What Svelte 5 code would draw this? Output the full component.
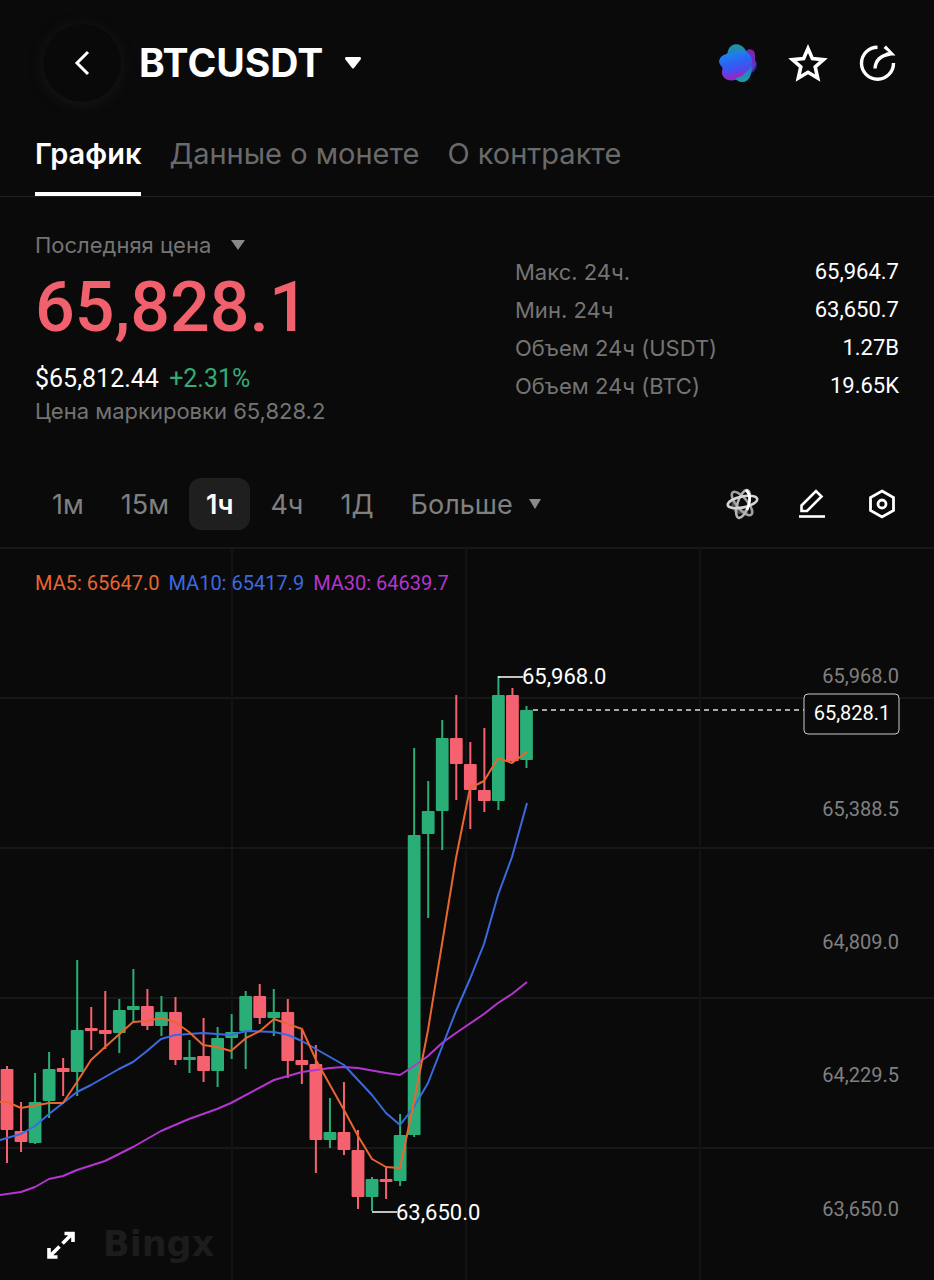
<script>
    const tabs = ["График", "Данные о монете", "О контракте"];
    const intervals = ["1м", "15м", "1ч", "4ч", "1Д"];

    const stats = [
        { label: "Макс. 24ч.", value: "65,964.7" },
        { label: "Мин. 24ч", value: "63,650.7" },
        { label: "Объем 24ч (USDT)", value: "1.27B" },
        { label: "Объем 24ч (BTC)", value: "19.65K" },
    ];

    const averages = [
        { label: "MA5: 65647.0", color: "#ea6530" },
        { label: "MA10: 65417.9", color: "#3b6ae0" },
        { label: "MA30: 64639.7", color: "#b535d0" },
    ];

    const CHART_TOP = 548;
    const STEP = 14.04;
    const BODY_WIDTH = 12.8;

    // up/down, high, body top, body bottom, low
    const candles = [
        ["down", 1066, 1069, 1130, 1163],
        ["down", 1102, 1131, 1142, 1152],
        ["up", 1073, 1102, 1143, 1144],
        ["up", 1052, 1069, 1101, 1118],
        ["down", 1058, 1068, 1072, 1096],
        ["up", 960, 1030, 1072, 1096],
        ["down", 1007, 1028, 1031, 1050],
        ["down", 991, 1030, 1034, 1049],
        ["up", 999, 1010, 1033, 1053],
        ["up", 969, 1006, 1010, 1021],
        ["down", 989, 1006, 1026, 1030],
        ["up", 996, 1012, 1026, 1036],
        ["down", 997, 1012, 1060, 1065],
        ["up", 1040, 1057, 1060, 1073],
        ["down", 1018, 1056, 1071, 1082],
        ["up", 1027, 1038, 1071, 1087],
        ["up", 1014, 1032, 1038, 1059],
        ["up", 991, 996, 1031, 1069],
        ["down", 984, 996, 1018, 1024],
        ["up", 989, 1012, 1018, 1036],
        ["down", 999, 1012, 1061, 1078],
        ["down", 1030, 1060, 1065, 1084],
        ["down", 1045, 1064, 1140, 1173],
        ["up", 1098, 1132, 1140, 1148],
        ["down", 1082, 1132, 1150, 1155],
        ["down", 1130, 1150, 1197, 1209],
        ["up", 1177, 1179, 1197, 1211],
        ["down", 1167, 1179, 1182, 1199],
        ["up", 1114, 1135, 1181, 1186],
        ["up", 748, 835, 1135, 1137],
        ["up", 781, 811, 834, 918],
        ["up", 720, 738, 811, 850],
        ["down", 695, 738, 764, 800],
        ["down", 742, 764, 790, 829],
        ["down", 728, 790, 801, 812],
        ["up", 676, 695, 801, 810],
        ["down", 688, 695, 761, 763],
        ["up", 706, 710, 760, 768],
    ].map(([dir, high, top, bottom, low], i) => ({ dir, high, top, bottom, low, x: 7 + i * STEP }));

    const lines = [
        {
            color: "#b535d0",
            points: "0,1195 21,1192 35,1187 49,1179 63,1176 77,1170 105,1161 119,1154 133,1147 161,1131 189,1119 203,1114 217,1109 231,1103 274,1080 302,1072 330,1068 344,1067 358,1068 386,1073 400,1075 414,1066 428,1056 442,1043 456,1033 484,1014 498,1003 512,994 527,982",
        },
        {
            color: "#3b6ae0",
            points: "0,1140 7,1138 21,1134 35,1126 49,1114 63,1103 77,1092 91,1085 105,1077 119,1069 133,1062 147,1051 161,1039 175,1035 203,1033 231,1035 246,1031 274,1032 288,1035 302,1041 316,1049 344,1065 372,1095 386,1113 400,1125 414,1107 428,1083 442,1047 456,1011 470,979 484,944 498,895 512,857 527,803",
        },
        {
            color: "#ea6530",
            points: "0,1102 7,1102 21,1108 49,1103 63,1103 77,1082 91,1060 105,1047 133,1022 147,1021 161,1018 175,1022 189,1032 203,1045 217,1047 231,1051 246,1038 260,1031 274,1019 288,1024 302,1029 316,1060 344,1110 358,1136 372,1159 386,1167 400,1168 414,1102 428,1030 442,944 456,858 470,788 484,781 498,758 512,763 527,752",
        },
    ];

    const gridRows = [548, 698, 848, 998, 1148];
    const gridCols = [232, 466, 700];

    const priceTicks = [
        { y: 683, label: "65,968.0" },
        { y: 816, label: "65,388.5" },
        { y: 949, label: "64,809.0" },
        { y: 1082, label: "64,229.5" },
        { y: 1216, label: "63,650.0" },
    ];

    let activeTab = $state("График");
    let activeInterval = $state("1ч");
</script>

<div class="screen">
    <header>
        <button class="back" aria-label="Назад">
            <svg width="40" height="40" viewBox="0 0 40 40">
                <path d="M26 9 15 20 26 31" fill="none" stroke="#fff" stroke-width="3" />
            </svg>
        </button>
        <button class="pair">
            <span>BTCUSDT</span>
            <svg width="16" height="12" viewBox="0 0 16 12"><path d="M1 0h14q1 0 1 2l-7 9q-1 1-2 0L0 2Q0 0 1 0z" fill="#fff" /></svg>
        </button>
        <div class="actions">
            <button aria-label="AI">
                <svg width="40" height="40" viewBox="0 0 40 40">
                    <defs>
                        <linearGradient id="blob" x1="0" y1="0" x2="0.3" y2="1">
                            <stop offset="0" stop-color="#1c8fe8" />
                            <stop offset="0.5" stop-color="#2b63f5" />
                            <stop offset="0.8" stop-color="#4a4be8" />
                            <stop offset="1" stop-color="#a021c4" />
                        </linearGradient>
                        <linearGradient id="teal" x1="0" y1="0" x2="0" y2="1">
                            <stop offset="0" stop-color="#1f93a0" />
                            <stop offset="0.5" stop-color="#2272e6" />
                            <stop offset="1" stop-color="#249aa0" />
                        </linearGradient>
                        <linearGradient id="plum" x1="1" y1="0" x2="0" y2="1">
                            <stop offset="0" stop-color="#8d1da1" />
                            <stop offset="0.5" stop-color="#3c49df" />
                            <stop offset="1" stop-color="#b01fc0" />
                        </linearGradient>
                    </defs>
                    <ellipse cx="30" cy="22" rx="9" ry="9" fill="#1b2c78" />
                    <path d="M28 8c4-4 10-1 9 6 0 3 0 4 1 7-2 9-12 14-21 16-8 2-14-3-13-9C5 21 22 13 28 8z" fill="url(#plum)" />
                    <path d="M10 8c2-9 14-9 18 0 3 4 4 8 5 13 2 8-1 18-8 18-6 1-10-5-12-14C11 19 7 15 10 8z" fill="url(#teal)" />
                    <path d="M1 18C3 10 12 10 20 9c8-2 14 3 14 9 0 7-5 10-9 14-5 4-12 4-18 2-4-3-1-6-3-10-2-2-3-4-3-6z" fill="url(#blob)" />
                </svg>
            </button>
            <button aria-label="В избранное">
                <svg width="40" height="40" viewBox="0 0 40 40">
                    <path d="M20 5.500 24.400 15.600 35.500 16.600 27.200 24 29.700 35 20 29.300 10.300 35 12.800 24 4.500 16.600 15.600 15.600z" fill="none" stroke="#fff" stroke-width="3.600" />
                </svg>
            </button>
            <button aria-label="Поделиться">
                <svg width="40" height="40" viewBox="0 0 40 40" fill="none" stroke="#fff" stroke-width="3.400">
                    <path d="M19.500 4.200A16 16 0 1 0 35.500 20" />
                    <path d="M17 25.500C17.500 17.500 23 12.500 32 11" />
                    <path d="M28 2.500 37.500 12.500H28V9.500h3L25.500 5z" fill="#fff" stroke="none" />
                </svg>
            </button>
        </div>
    </header>

    <nav>
        {#each tabs as tab}
            <button class="tab" class:active={tab === activeTab} onclick={() => (activeTab = tab)}>{tab}</button>
        {/each}
    </nav>

    <section class="summary">
        <div class="price">
            <button class="price-type">
                Последняя цена
                <svg width="14" height="10" viewBox="0 0 14 10"><path d="M0 0h14L7 10z" fill="#8a8a8a" /></svg>
            </button>
            <div class="last">65,828.1</div>
            <div class="index">$65,812.44 <span>+2.31%</span></div>
            <div class="mark">Цена маркировки 65,828.2</div>
        </div>
        <dl>
            {#each stats as stat}
                <div class="stat">
                    <dt>{stat.label}</dt>
                    <dd>{stat.value}</dd>
                </div>
            {/each}
        </dl>
    </section>

    <div class="toolbar">
        <div class="intervals">
            {#each intervals as interval}
                <button class:active={interval === activeInterval} onclick={() => (activeInterval = interval)}>{interval}</button>
            {/each}
            <button class="more">
                Больше
                <svg width="12" height="10" viewBox="0 0 12 10"><path d="M0 0h12L6 10z" fill="#8a8a8a" /></svg>
            </button>
        </div>
        <div class="tools">
            <button aria-label="Анализ">
                <svg width="34" height="34" viewBox="0 0 34 34" fill="none" stroke-width="2.600">
                    <path d="M9 14C6 23 12 27 23 24" stroke="#484848" stroke-width="3.600" />
                    <ellipse cx="17" cy="16.500" rx="14.500" ry="5.500" transform="rotate(50 17 16.500)" stroke="#a0a0a0" />
                    <ellipse cx="18" cy="17" rx="14.500" ry="5.500" transform="rotate(-72 18 17)" stroke="#b5b5b5" />
                    <ellipse cx="17.500" cy="15" rx="15" ry="5.500" transform="rotate(-12 17.500 15)" stroke="#d5d5d5" />
                    <path d="M21 3C26 8 25 16 22 23" stroke="#fff" />
                </svg>
            </button>
            <button aria-label="Рисование">
                <svg width="34" height="34" viewBox="0 0 34 34" fill="none" stroke="#fff" stroke-width="2.600">
                    <path d="M6.500 18.500 21 4 26.500 9.500 12 24H6.500z" />
                    <path d="M4 29.500h26" />
                </svg>
            </button>
            <button aria-label="Настройки">
                <svg width="34" height="34" viewBox="0 0 34 34" fill="none" stroke="#fff" stroke-width="2.800">
                    <path d="M17 4 28.500 10.500v13L17 30 5.500 23.500v-13z" />
                    <circle cx="17" cy="17" r="4" />
                </svg>
            </button>
        </div>
    </div>

    <div class="chart">
        <svg class="plot" viewBox="0 {CHART_TOP - 1} 934 733">
            {#each gridRows as y}
                <line x1="0" x2="934" y1={y} y2={y} class="grid" />
            {/each}
            {#each gridCols as x}
                <line x1={x} x2={x} y1={CHART_TOP} y2="1280" class="grid column" />
            {/each}

            {#each candles as c}
                <g class={c.dir}>
                    <rect x={c.x - 1} y={c.high} width="2" height={c.low - c.high} />
                    <rect x={c.x - BODY_WIDTH / 2} y={c.top} width={BODY_WIDTH} height={c.bottom - c.top} rx="1" />
                </g>
            {/each}

            {#each lines as line}
                <polyline points={line.points} stroke={line.color} class="average" />
            {/each}

            <path d="M498 677h25M372 1212h25" stroke="#fff" stroke-width="1.500" />
            <text x="522" y="684" class="extreme">65,968.0</text>
            <text x="396" y="1220" class="extreme">63,650.0</text>

            {#each priceTicks as tick}
                <text x="899" y={tick.y} class="tick">{tick.label}</text>
            {/each}

            <line x1="533" x2="804" y1="710" y2="710" class="current-line" />
            <rect x="804" y="694" width="95" height="40" rx="4" class="current-box" />
            <text x="852" y="720" class="current">65,828.1</text>

            <text x="103" y="1256" class="watermark">Bingx</text>
        </svg>
        <div class="legend">
            {#each averages as average}
                <span style="color: {average.color}">{average.label}</span>
            {/each}
        </div>
        <button class="expand" aria-label="На весь экран">
            <svg width="32" height="32" viewBox="0 0 32 32" fill="none" stroke="#fff" stroke-width="3.600">
                <path d="M17.500 14.500 27 5M19.500 4.500H28V13M14.500 17.500 5 27M4 19v9h8.500" />
            </svg>
        </button>
    </div>
</div>

<style>
    :global(body) {
        margin: 0;
        background: #0a0a0a;
    }

    .screen {
        background: #0a0a0a;
        color: #fff;
        font-family: Inter, "Open Sans", sans-serif;
    }

    button {
        border: 0;
        padding: 0;
        background: none;
        color: inherit;
        font: inherit;
        cursor: pointer;
    }

    svg {
        display: block;
    }

    header {
        display: flex;
        align-items: center;
        padding: 24px 36px 0 43px;
    }

    .back {
        display: flex;
        align-items: center;
        justify-content: center;
        width: 78px;
        height: 78px;
        border-radius: 50%;
        background: #090909;
        box-shadow: 0 2px 12px 2px #151515;
    }

    .pair {
        display: flex;
        align-items: center;
        gap: 22px;
        margin-left: 18px;
        font-size: 39px;
        font-weight: 700;
        line-height: 48px;
    }

    .actions {
        display: flex;
        gap: 30px;
        margin-left: auto;
    }

    nav {
        display: flex;
        gap: 28px;
        padding: 24px 35px 0;
        border-bottom: 1px solid #222;
    }

    .tab {
        height: 70px;
        padding-bottom: 12px;
        border-bottom: 4px solid transparent;
        color: #6a6a6a;
        font-size: 29px;
    }

    .tab.active {
        border-color: #fff;
        color: #fff;
        font-weight: 600;
    }

    .summary {
        display: flex;
        padding: 33px 35px 0;
        color: #747474;
        font-size: 22px;
    }

    .price {
        flex: 480;
    }

    .price-type {
        display: flex;
        align-items: center;
        gap: 20px;
        line-height: 30px;
    }

    .last {
        color: #f0616d;
        font-family: Roboto, sans-serif;
        font-size: 70px;
        font-weight: 500;
        line-height: 94px;
    }

    .index {
        margin-top: 9px;
        color: #fff;
        font-family: Roboto, sans-serif;
        font-size: 25px;
        line-height: 32px;
    }

    .index span {
        margin-left: 4px;
        color: #35ab76;
    }

    .mark {
        line-height: 32px;
    }

    dl {
        flex: 384;
        margin: 23px 0 0;
    }

    .stat {
        display: flex;
        justify-content: space-between;
        line-height: 38px;
    }

    dd {
        margin: 0;
        color: #fff;
        font-family: Roboto, sans-serif;
    }

    .toolbar {
        display: flex;
        align-items: center;
        justify-content: space-between;
        padding: 51px 35px 17px;
    }

    .intervals {
        display: flex;
        gap: 3px;
        color: #808080;
        font-size: 27px;
    }

    .intervals button {
        height: 52px;
        padding: 0 17px;
        border-radius: 12px;
    }

    .intervals .active {
        background: #1f1f1f;
        color: #fff;
        font-weight: 600;
    }

    .intervals .more {
        display: flex;
        align-items: center;
        gap: 16px;
    }

    .tools {
        display: flex;
        gap: 36px;
    }

    .chart {
        position: relative;
        font-family: Roboto, sans-serif;
    }

    .plot {
        width: 100%;
        height: auto;
    }

    .grid {
        stroke: #181818;
        stroke-width: 2;
    }

    .grid.column {
        stroke: #131313;
    }

    .up {
        fill: #2aae77;
    }

    .down {
        fill: #f5616f;
    }

    .average {
        fill: none;
        stroke-width: 2;
        stroke-linejoin: round;
    }

    .extreme {
        fill: #fff;
        font-size: 22px;
    }

    .tick {
        fill: #808080;
        font-size: 20px;
        text-anchor: end;
    }

    .current-line {
        stroke: #ddd;
        stroke-width: 1.5;
        stroke-dasharray: 5 4;
    }

    .current-box {
        fill: #0a0a0a;
        stroke: #ccc;
    }

    .current {
        fill: #fff;
        font-size: 20px;
        text-anchor: middle;
    }

    .watermark {
        fill: #1c1c1c;
        font-family: "DejaVu Sans", sans-serif;
        font-size: 35px;
        font-weight: 700;
    }

    .legend {
        position: absolute;
        top: 24px;
        left: 35px;
        display: flex;
        gap: 9px;
        font-size: 20px;
        line-height: 24px;
    }

    .expand {
        position: absolute;
        bottom: 19px;
        left: 45px;
    }
</style>
